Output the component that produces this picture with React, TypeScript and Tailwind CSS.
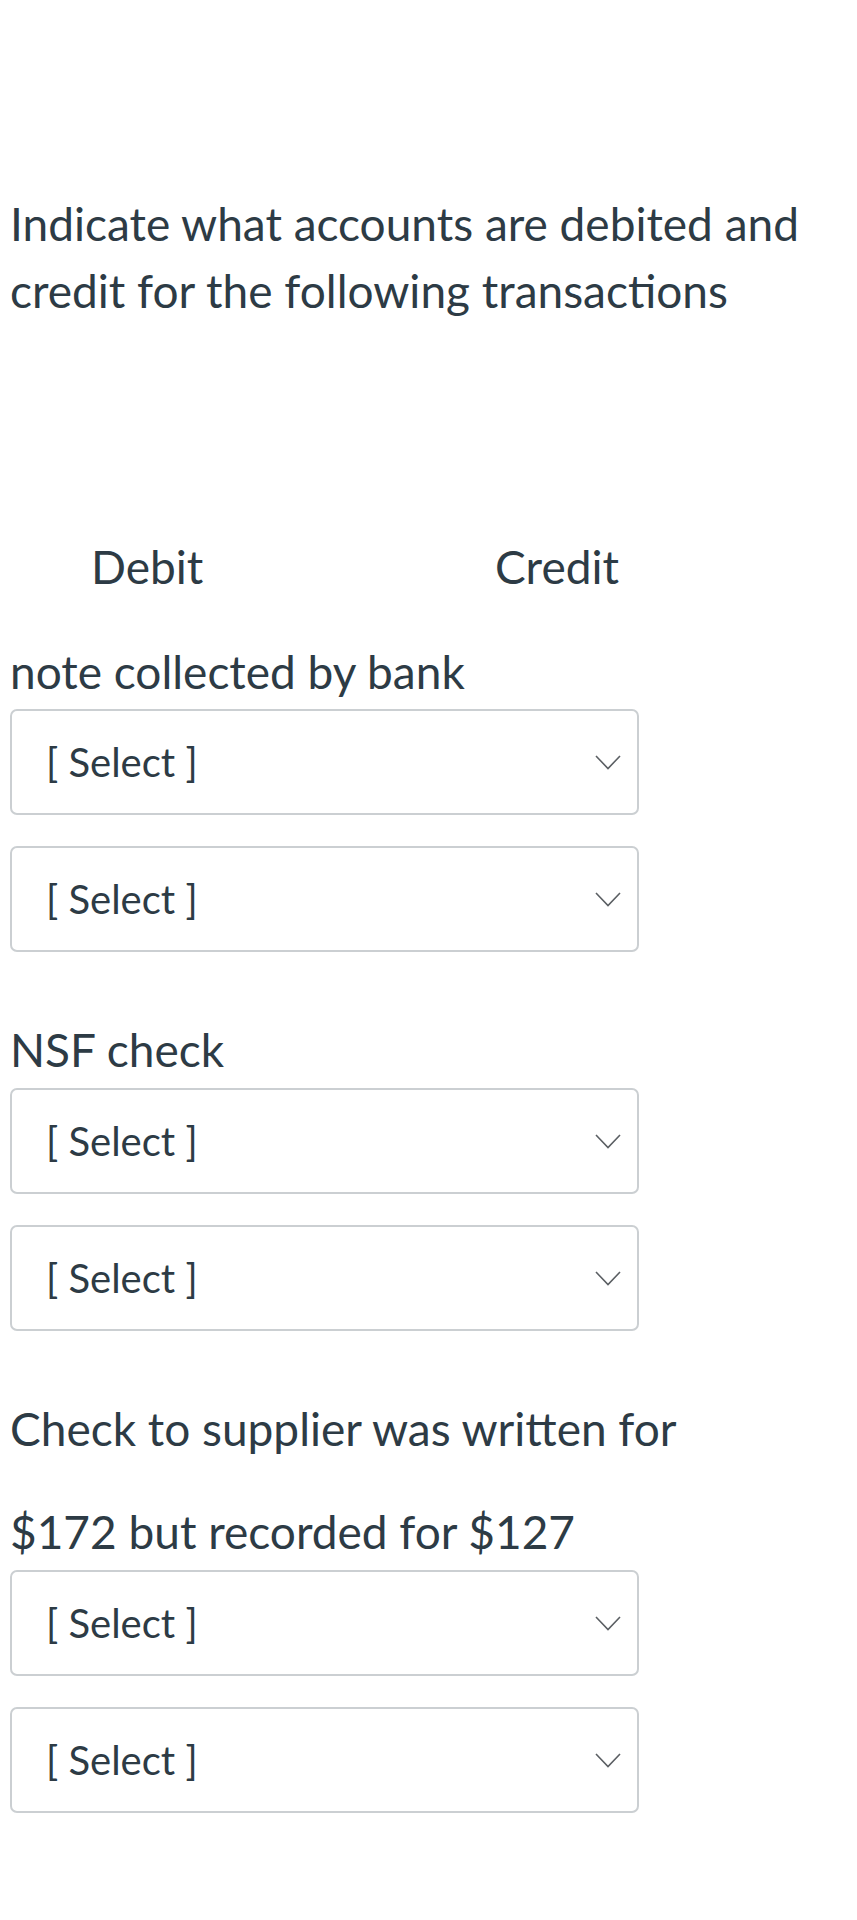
const lastLabel = ["Check to supplier was written for", "$172 but recorded for $127"];

function Chevron() {
  return (
    <svg width="26" height="15" viewBox="0 0 26 15" fill="none" className="shrink-0">
      <polyline points="1,1 13,13.5 25,1" stroke="#5b5f63" strokeWidth="1.6" strokeLinejoin="miter" />
    </svg>
  );
}

function SelectBox() {
  return (
    <div className="flex h-[106px] w-[629px] items-center justify-between rounded-[7px] border-2 border-[#cbcfd2] bg-white pl-[34px] pr-[16px]">
      <span className="text-[40px] leading-none text-[#2d3b45]">[ Select ]</span>
      <Chevron />
    </div>
  );
}

export default function App() {
  return (
    <div
      className="min-h-[1920px] w-[857px] bg-white pl-[10px] text-[#2d3b45]"
      style={{ fontFamily: "Lato, 'Noto Sans', sans-serif" }}
    >
      <div className="pt-[190px] text-[46px] leading-[67px]">
        <p>Indicate what accounts are debited and</p>
        <p>credit for the following transactions</p>
      </div>

      <div className="mt-[209px] flex text-[46px] leading-[67px]">
        <span className="ml-[81px] w-[404px]">Debit</span>
        <span>Credit</span>
      </div>

      <div className="mt-[38px]">
        <p className="text-[46px] leading-[67px]">note collected by bank</p>
        <div className="mt-[4px] flex flex-col gap-[31px]">
          <SelectBox />
          <SelectBox />
        </div>

        <p className="mt-[64px] text-[46px] leading-[67px]">NSF check</p>
        <div className="mt-[5px] flex flex-col gap-[31px]">
          <SelectBox />
          <SelectBox />
        </div>

        <p className="mt-[64px] text-[46px] leading-[67px]">{lastLabel[0]}</p>
        <p className="mt-[36px] text-[46px] leading-[67px]">{lastLabel[1]}</p>
        <div className="mt-[5px] flex flex-col gap-[31px]">
          <SelectBox />
          <SelectBox />
        </div>
      </div>
    </div>
  );
}
